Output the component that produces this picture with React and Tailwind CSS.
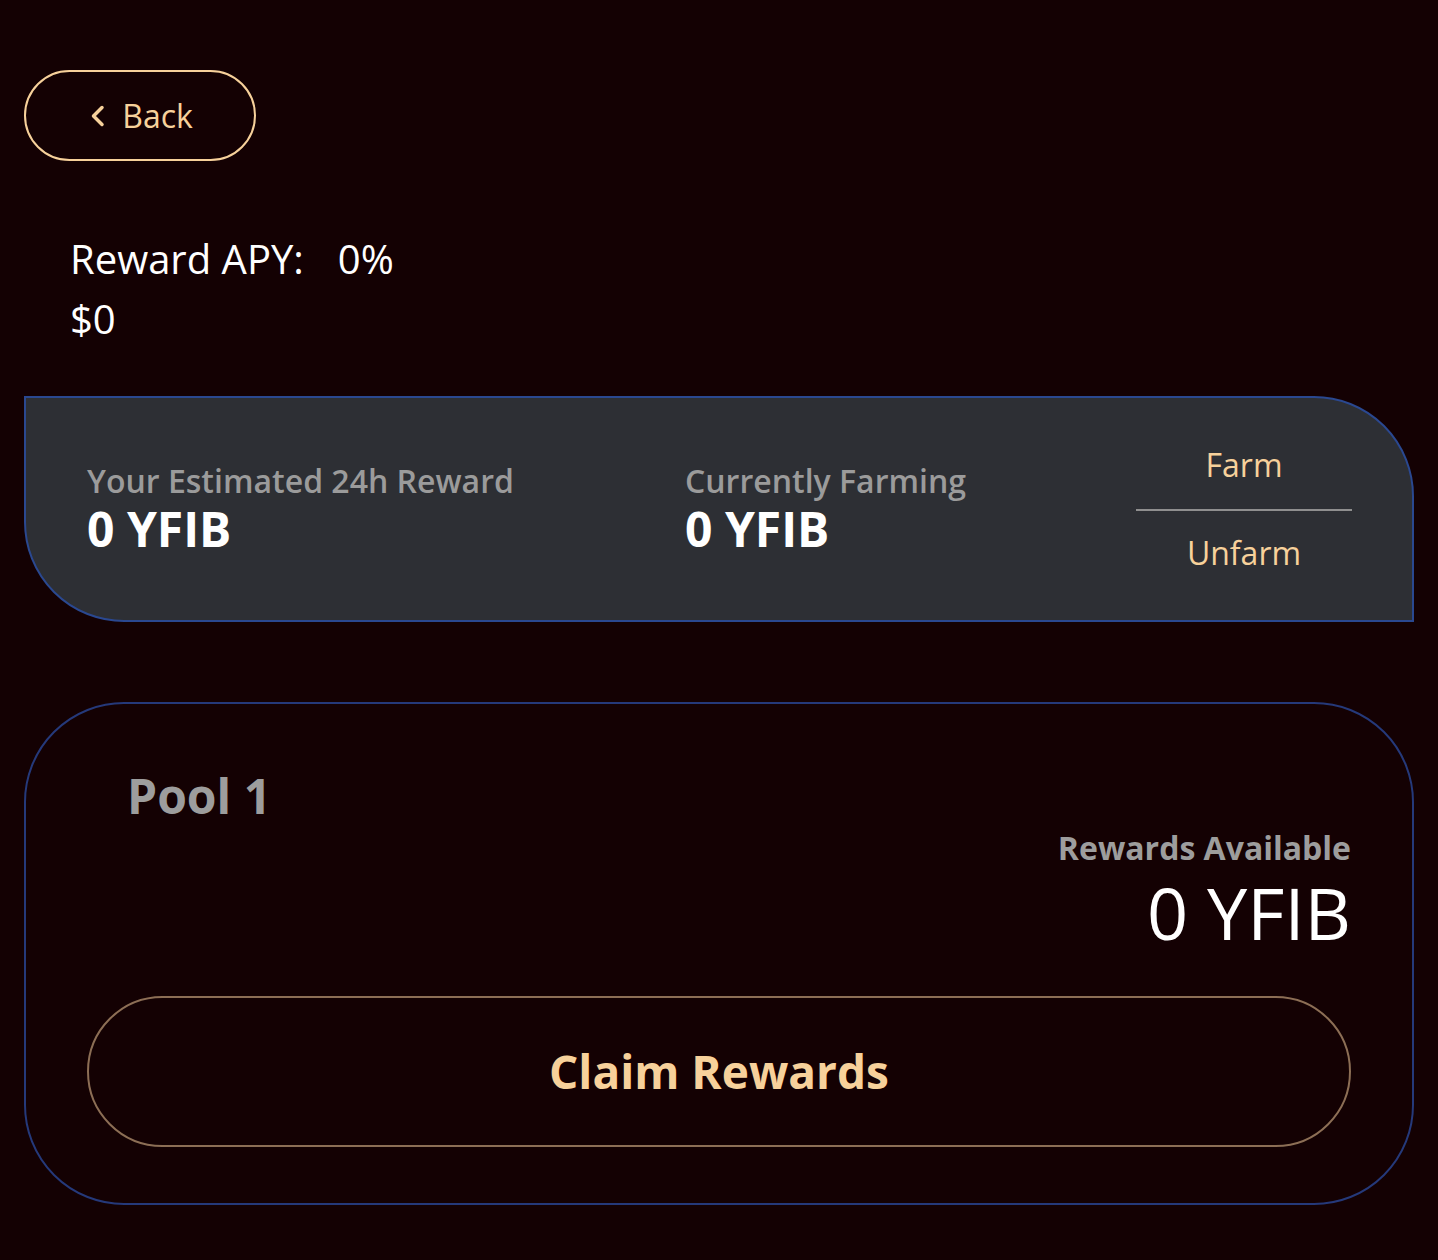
import React from "react";

const font = { fontFamily: "'Open Sans', 'Noto Sans', sans-serif" };

const ChevronLeft = () => (
  <svg width="18" height="26" viewBox="0 0 18 26" fill="none">
    <path d="M13 4.5 L4.5 13 L13 21.5" stroke="#f7d19b" strokeWidth="3.5" strokeLinecap="round" strokeLinejoin="round" />
  </svg>
);

const App = () => {
  return (
    <div className="min-h-[1260px] w-full bg-[#140103] px-6 pt-[70px]" style={font}>
      <button className="flex h-[91px] w-[232px] items-center justify-center gap-[15px] rounded-full border-2 border-[#f7d19b] pl-[2px] text-[32px] text-[#f7d19b]">
        <ChevronLeft />
        <span>Back</span>
      </button>

      <div className="mt-[68px] pl-[46px] text-[40px] leading-[60px] text-white">
        <p>
          Reward APY:<span className="ml-[34px]">0%</span>
        </p>
        <p>$0</p>
      </div>

      <div className="mt-[47px] flex h-[226px] items-center rounded-tr-[100px] rounded-bl-[100px] border-2 border-[#2a4890] bg-[#2d2f34] pl-[61px] pr-[60px]">
        <div className="w-[598px]">
          <p className="text-[32px] font-semibold leading-[40px] text-[#9b9b9b]">Your Estimated 24h Reward</p>
          <p className="text-[48px] font-bold leading-[56px] text-white">0 YFIB</p>
        </div>
        <div className="flex-1">
          <p className="text-[32px] font-semibold leading-[40px] text-[#9b9b9b]">Currently Farming</p>
          <p className="text-[48px] font-bold leading-[56px] text-white">0 YFIB</p>
        </div>
        <div className="flex w-[216px] flex-col items-center">
          <button className="pb-[22px] text-[32px] leading-[44px] text-[#f7d19b]">Farm</button>
          <div className="h-[2px] w-full bg-[#8f8f8f]" />
          <button className="pt-[20px] text-[32px] leading-[44px] text-[#f7d19b]">Unfarm</button>
        </div>
      </div>

      <div className="mt-[80px] rounded-[100px] border-2 border-[#25397a] px-[61px] pb-[56px] pt-[62px]">
        <p className="pl-[40px] text-[48px] font-bold leading-[60px] text-[#9d9d9d]">Pool 1</p>
        <div className="flex flex-col items-end">
          <p className="text-[32px] font-bold leading-[44px] text-[#9d9d9d]">Rewards Available</p>
          <p className="text-[72px] leading-[84px] text-white">0 YFIB</p>
        </div>
        <button className="mt-[42px] flex h-[151px] w-full items-center justify-center rounded-full border-2 border-[#8c6e55] text-[46px] font-bold text-[#f7d19b]">
          Claim Rewards
        </button>
      </div>
    </div>
  );
};

export default App;
